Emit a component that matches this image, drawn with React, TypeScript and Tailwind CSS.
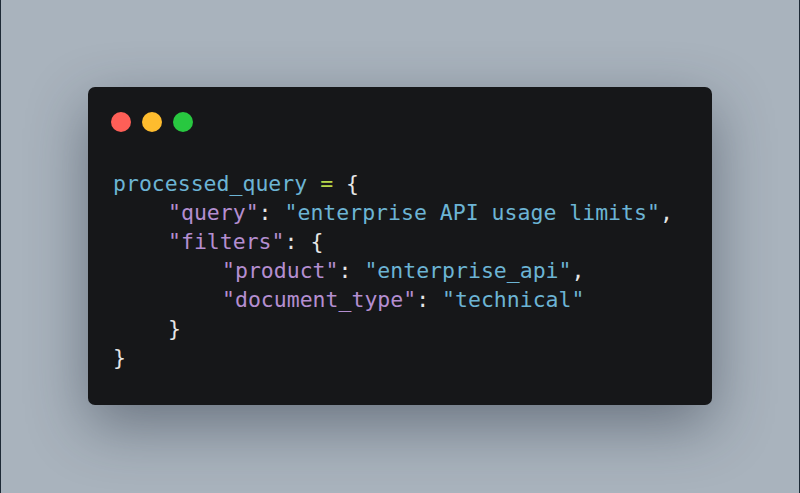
export default function App() {
  const mono = { fontFamily: '"DejaVu Sans Mono", "Liberation Mono", monospace' }

  return (
    <div className="w-[800px] h-[493px] bg-[#a9b3bd] border-x border-[#1e2a36] flex items-start justify-center pt-[87px]">
      <div className="w-[624px] h-[318px] rounded-[7px] bg-[#161719] shadow-[0_20px_60px_rgba(30,40,55,0.45)] pl-[23px] pt-[25px]">
        <div className="flex gap-[11px]">
          <span className="w-[20px] h-[20px] rounded-full bg-[#fe5f57]" />
          <span className="w-[20px] h-[20px] rounded-full bg-[#febc2e]" />
          <span className="w-[20px] h-[20px] rounded-full bg-[#28c840]" />
        </div>
        <pre className="mt-[37px] ml-[2px] text-[21.5px] leading-[29px] text-[#e6e6e6]" style={mono}>
          <div>
            <span className="text-[#6cb4d4]">processed_query</span> <span className="text-[#b6d84a]">=</span> {"{"}
          </div>
          <div className="pl-[55px]">
            <span className="text-[#b48ed0]">"query"</span>: <span className="text-[#6cb4d4]">"enterprise API usage limits"</span>,
          </div>
          <div className="pl-[55px]">
            <span className="text-[#b48ed0]">"filters"</span>: {"{"}
          </div>
          <div className="pl-[109px]">
            <span className="text-[#b48ed0]">"product"</span>: <span className="text-[#6cb4d4]">"enterprise_api"</span>,
          </div>
          <div className="pl-[109px]">
            <span className="text-[#b48ed0]">"document_type"</span>: <span className="text-[#6cb4d4]">"technical"</span>
          </div>
          <div className="pl-[55px]">{"}"}</div>
          <div>{"}"}</div>
        </pre>
      </div>
    </div>
  )
}
